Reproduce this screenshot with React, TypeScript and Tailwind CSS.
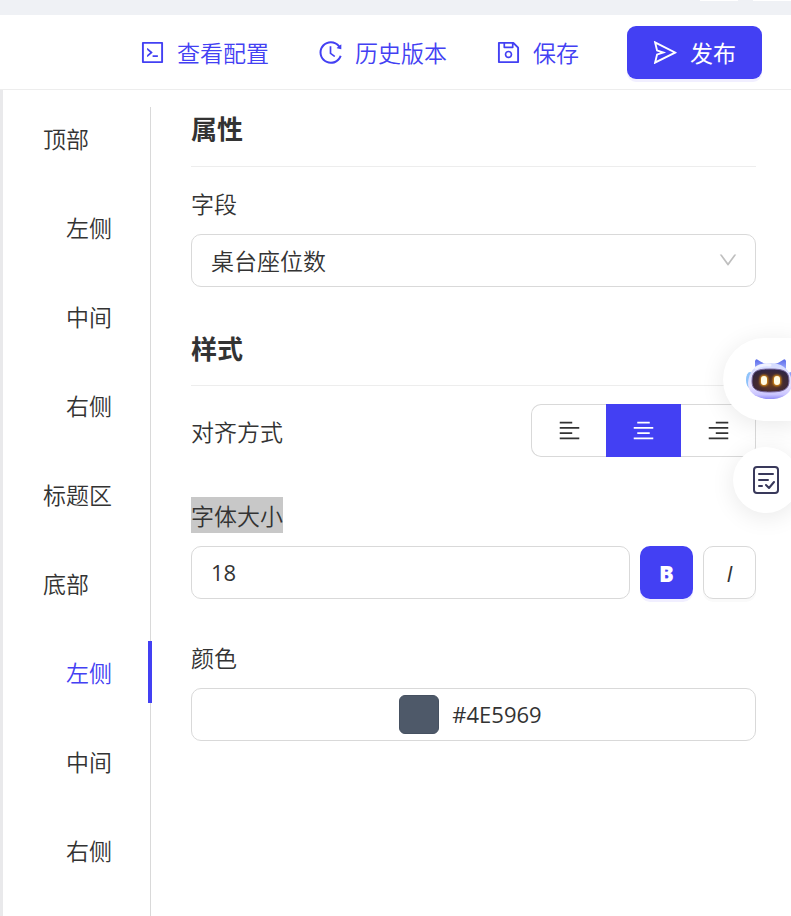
import React, { useState } from 'react';
import {
  AiOutlineAlignCenter,
  AiOutlineAlignLeft,
  AiOutlineAlignRight,
  AiOutlineCode,
  AiOutlineDown,
  AiOutlineHistory,
  AiOutlineSave,
  AiOutlineSend,
} from 'react-icons/ai';
import clsx from 'clsx';

const sections = [
  { id: 'top', label: '顶部' },
  { id: 'top-left', label: '左侧', nested: true },
  { id: 'top-center', label: '中间', nested: true },
  { id: 'top-right', label: '右侧', nested: true },
  { id: 'title', label: '标题区' },
  { id: 'bottom', label: '底部' },
  { id: 'bottom-left', label: '左侧', nested: true },
  { id: 'bottom-center', label: '中间', nested: true },
  { id: 'bottom-right', label: '右侧', nested: true },
];

const actions = [
  { label: '查看配置', icon: AiOutlineCode },
  { label: '历史版本', icon: AiOutlineHistory },
  { label: '保存', icon: AiOutlineSave },
];

const alignments = [
  { id: 'left', label: '左对齐', icon: AiOutlineAlignLeft },
  { id: 'center', label: '居中', icon: AiOutlineAlignCenter },
  { id: 'right', label: '右对齐', icon: AiOutlineAlignRight },
];

function Header() {
  return (
    <header>
      <div className="flex h-[15px] justify-end gap-[15px] bg-[#eff1f5]">
        <div className="h-px w-[38px] bg-white" />
        <div className="h-px w-[38px] bg-white" />
      </div>
      <div className="flex h-[75px] items-center justify-end gap-12 border-b border-[#ededed] pr-[29px]">
        {actions.map(({ label, icon: Icon }) => (
          <button key={label} className="flex items-center gap-[11px] text-[#4340f3]">
            <Icon size={27} />
            {label}
          </button>
        ))}
        <button className="flex h-[53px] items-center gap-[11px] rounded-[9px] bg-[#4340f3] pr-[26px] pl-[25px] font-normal text-white shadow-[0_3px_0_#f1efff]">
          <AiOutlineSend size={27} />
          发布
        </button>
      </div>
    </header>
  );
}

function SectionNav() {
  const [active, setActive] = useState('bottom-left');

  return (
    <nav className="mt-[17px] flex w-[148px] shrink-0 flex-col gap-[27px] border-r border-[#d9d9d9]">
      {sections.map(({ id, label, nested }) => (
        <button
          key={id}
          onClick={() => setActive(id)}
          className={clsx(
            '-mr-0.5 h-[62px] border-r-4 text-left',
            nested ? 'pl-[63px]' : 'pl-10',
            active === id ? 'border-[#4340f3] text-[#4340f3]' : 'border-transparent',
          )}
        >
          {label}
        </button>
      ))}
    </nav>
  );
}

function PropertyPanel() {
  const [field, setField] = useState('seats');
  const [align, setAlign] = useState('center');
  const [fontSize, setFontSize] = useState('18');
  const [bold, setBold] = useState(true);
  const [italic, setItalic] = useState(false);

  return (
    <main className="flex-1 pr-[35px] pl-10">
      <h2 className="mt-[18px] border-b border-[#ededed] pb-[18px] text-[26px] leading-10 font-bold">属性</h2>
      <label htmlFor="field" className="mt-[18px] block">字段</label>
      <div className="relative mt-[13px]">
        <select
          id="field"
          value={field}
          onChange={(e) => setField(e.target.value)}
          className="h-[53px] w-full appearance-none rounded-[10px] border border-[#d9d9d9] bg-white pr-12 pb-0.5 pl-[19px]"
        >
          <option value="seats">桌台座位数</option>
        </select>
        <AiOutlineDown size={22} className="pointer-events-none absolute top-[15px] right-[17px] text-[#bfbfbf]" />
      </div>

      <h2 className="mt-[41px] border-b border-[#ededed] pb-[17px] text-[26px] leading-10 font-bold">样式</h2>
      <div className="mt-[18px] flex items-center justify-between">
        <span id="align-label">对齐方式</span>
        <div role="group" aria-labelledby="align-label" className="flex">
          {alignments.map(({ id, label, icon: Icon }) => (
            <button
              key={id}
              aria-label={label}
              aria-pressed={align === id}
              onClick={() => setAlign(id)}
              className={clsx(
                'flex h-[53px] w-[75px] items-center justify-center border-y first:rounded-l-[10px] first:border-l last:rounded-r-[10px] last:border-r',
                align === id ? 'border-[#4340f3] bg-[#4340f3] text-white' : 'border-[#d9d9d9]',
              )}
            >
              <Icon size={25} />
            </button>
          ))}
        </div>
      </div>

      <label htmlFor="font-size" className="mt-10 block">
        <span className="inline-block bg-[#c8c8c8]">字体大小</span>
      </label>
      <div className="mt-[13px] flex gap-2.5">
        <input
          id="font-size"
          value={fontSize}
          onChange={(e) => setFontSize(e.target.value)}
          className="h-[53px] w-full min-w-0 flex-1 rounded-[10px] border border-[#d9d9d9] pb-0.5 pl-[19px] font-['Open_Sans',sans-serif] text-[22px] font-normal"
        />
        <button
          aria-label="加粗"
          aria-pressed={bold}
          onClick={() => setBold(!bold)}
          className={clsx(
            "h-[53px] w-[53px] rounded-[10px] font-['Open_Sans',sans-serif] text-[22px] font-extrabold",
            bold ? 'bg-[#4340f3] text-white shadow-[0_3px_0_#f1efff]' : 'border border-[#d9d9d9] shadow-[0_3px_0_#fafafa]',
          )}
        >
          B
        </button>
        <button
          aria-label="斜体"
          aria-pressed={italic}
          onClick={() => setItalic(!italic)}
          className={clsx(
            "h-[53px] w-[53px] rounded-[10px] font-['Open_Sans',sans-serif] text-[22px] font-normal italic",
            italic ? 'bg-[#4340f3] text-white shadow-[0_3px_0_#f1efff]' : 'border border-[#d9d9d9] shadow-[0_3px_0_#fafafa]',
          )}
        >
          I
        </button>
      </div>

      <div id="color-label" className="mt-10">颜色</div>
      <button
        aria-labelledby="color-label"
        className="mt-[13px] flex h-[53px] w-full items-center justify-center gap-[13px] rounded-[10px] border border-[#d9d9d9] pr-1.5"
      >
        <span className="h-[39px] w-10 rounded-md border border-[#465161] bg-[#4e5969]" />
        <span className="pb-0.5 font-['Open_Sans',sans-serif] text-[22px] font-normal">#4E5969</span>
      </button>
    </main>
  );
}

function RobotIcon() {
  return (
    <svg width="48" height="44" viewBox="0 0 48 44" fill="none" aria-hidden="true">
      <defs>
        <linearGradient id="shell" x1="24" y1="6" x2="24" y2="42" gradientUnits="userSpaceOnUse">
          <stop stopColor="#d5dcff" />
          <stop offset="0.6" stopColor="#e9e4ff" />
          <stop offset="0.85" stopColor="#c9c4ff" />
          <stop offset="1" stopColor="#8580f5" />
        </linearGradient>
        <linearGradient id="ear" x1="14" y1="1" x2="14" y2="12" gradientUnits="userSpaceOnUse">
          <stop stopColor="#5868e8" />
          <stop offset="1" stopColor="#a4b2ff" />
        </linearGradient>
        <radialGradient id="face" cx="0.5" cy="0.65" r="0.65">
          <stop stopColor="#6b3d1d" />
          <stop offset="0.6" stopColor="#422932" />
          <stop offset="1" stopColor="#2e2443" />
        </radialGradient>
        <filter id="glow" x="-1" y="-1" width="3" height="3">
          <feGaussianBlur stdDeviation="1.2" />
        </filter>
      </defs>
      <ellipse cx="4" cy="22" rx="4" ry="8" fill="#8fc3fa" />
      <ellipse cx="45" cy="22" rx="4" ry="8" fill="#8fa0fa" />
      <path d="M9 12 9 3Q10 0 12 2Q16 5 21 6ZM40 12 40 3Q39 0 37 2Q33 5 28 6Z" fill="url(#ear)" />
      <path d="M24 5C37 5 45 12 46 25C46 35 37 41 24 41S2 35 2 25C3 12 11 5 24 5Z" fill="url(#shell)" />
      <path d="M10 10Q15 6 24 7" stroke="#f7f8ff" strokeWidth="3" strokeLinecap="round" opacity="0.8" />
      <path d="M24 11C38 11 43 13 43 23C43 31 38 34 24 34S6 31 6 23C6 13 11 11 24 11Z" fill="url(#face)" stroke="#77669d" />
      <g fill="#f39b13" filter="url(#glow)">
        <rect x="14" y="17" width="8" height="11" rx="4" />
        <rect x="27" y="17" width="8" height="11" rx="4" />
      </g>
      <rect x="15" y="18" width="6" height="9" rx="3" fill="#fffbe5" />
      <rect x="28" y="18" width="6" height="9" rx="3" fill="#fffbe5" />
    </svg>
  );
}

function FloatingTools() {
  return (
    <div className="absolute top-[338px] -right-2 flex flex-col items-end gap-[26px]">
      <button
        aria-label="智能助手"
        className="flex h-[83px] w-[76px] items-center rounded-l-full bg-white pl-[23px] shadow-[0_4px_24px_rgba(0,0,0,0.09)]"
      >
        <RobotIcon />
      </button>
      <button
        aria-label="任务清单"
        className="flex h-[66px] w-[66px] items-center justify-center rounded-full bg-white shadow-[0_4px_24px_rgba(0,0,0,0.09)]"
      >
        <svg width="28" height="28" viewBox="0 0 28 28" fill="none" stroke="#39395b" strokeWidth="2" strokeLinecap="round" strokeLinejoin="round" aria-hidden="true">
          <rect x="2" y="1" width="24" height="26" rx="3" />
          <path d="M7 8h14M7 14h9M7 20h3M14 19l3 3 5-6" />
        </svg>
      </button>
    </div>
  );
}

export default function App() {
  return (
    <div className="relative flex min-h-screen flex-col overflow-hidden bg-white font-['Noto_Sans_CJK_SC',sans-serif] text-[23px] leading-9 font-[350] text-[#333]">
      <Header />
      <div className="flex flex-1 border-l-3 border-[#e9e9eb]">
        <SectionNav />
        <PropertyPanel />
      </div>
      <FloatingTools />
    </div>
  );
}
